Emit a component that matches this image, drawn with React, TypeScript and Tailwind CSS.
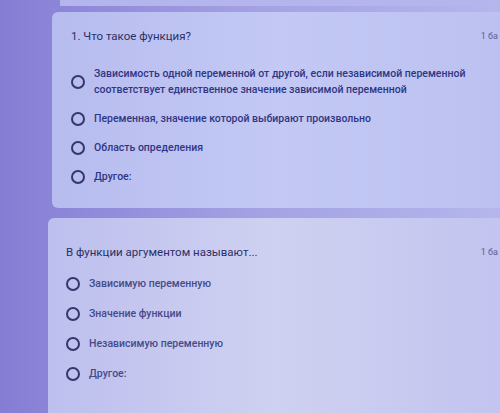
import React from 'react';

type Question = {
  title: string;
  options: string[][];
};

const questions: Question[] = [
  {
    title: '1. Что такое функция?',
    options: [
      [
        'Зависимость одной переменной от другой, если независимой переменной',
        'соответствует единственное значение зависимой переменной',
      ],
      ['Переменная, значение которой выбирают произвольно'],
      ['Область определения'],
      ['Другое:'],
    ],
  },
  {
    title: 'В функции аргументом называют...',
    options: [
      ['Зависимую переменную'],
      ['Значение функции'],
      ['Независимую переменную'],
      ['Другое:'],
    ],
  },
];

const Radio = () => (
  <span className="h-[14px] w-[14px] shrink-0 rounded-full border-[2px] border-[#34366c]" />
);

const QuestionCard: React.FC<{ q: Question; first?: boolean }> = ({ q, first }) => (
  <div
    className={`rounded-l-[6px] ${
      first
        ? 'ml-[52px] h-[196px] bg-gradient-to-r from-[#b7bcef] via-[#c3c9f4] to-[#bcc1f1] pl-[19px] pt-[16px]'
        : 'ml-[48px] h-[200px] bg-gradient-to-r from-[#bdbfee] via-[#cfd1f1] to-[#c3c4ef] pl-[18px] pt-[26px]'
    }`}
  >
    <div className="flex items-start justify-between pr-[2px]">
      <span className="text-[11.5px] leading-[16px] text-[#2c2f66]">{q.title}</span>
      <span className="text-[9px] leading-[16px] text-[#5b5f93]">1 ба</span>
    </div>
    <div className={`flex flex-col ${first ? 'mt-[22px] gap-[13px]' : 'mt-[16px] gap-[14px]'}`}>
      {q.options.map((opt, i) => (
        <div key={i} className="flex items-center gap-[9px]">
          <Radio />
          <div
            className={`flex flex-col text-[10.5px] font-medium leading-[16px] ${
              first ? 'text-[#303683]' : 'text-[#464b88]'
            }`}
          >
            {opt.map((line, j) => (
              <span key={j} className="whitespace-nowrap">
                {line}
              </span>
            ))}
          </div>
        </div>
      ))}
    </div>
  </div>
);

export default function App() {
  return (
    <div
      className="h-[413px] w-[500px] overflow-hidden bg-gradient-to-r from-[#857dd4] via-[#a3a1e3] to-[#b4b6ec]"
      style={{ fontFamily: 'Roboto, "Noto Sans", sans-serif' }}
    >
      <div className="ml-[60px] h-[6px] bg-[#b3b5ec]" />
      <div className="h-[6px]" />
      <QuestionCard q={questions[0]} first />
      <div className="h-[10px]" />
      <QuestionCard q={questions[1]} />
    </div>
  );
}
